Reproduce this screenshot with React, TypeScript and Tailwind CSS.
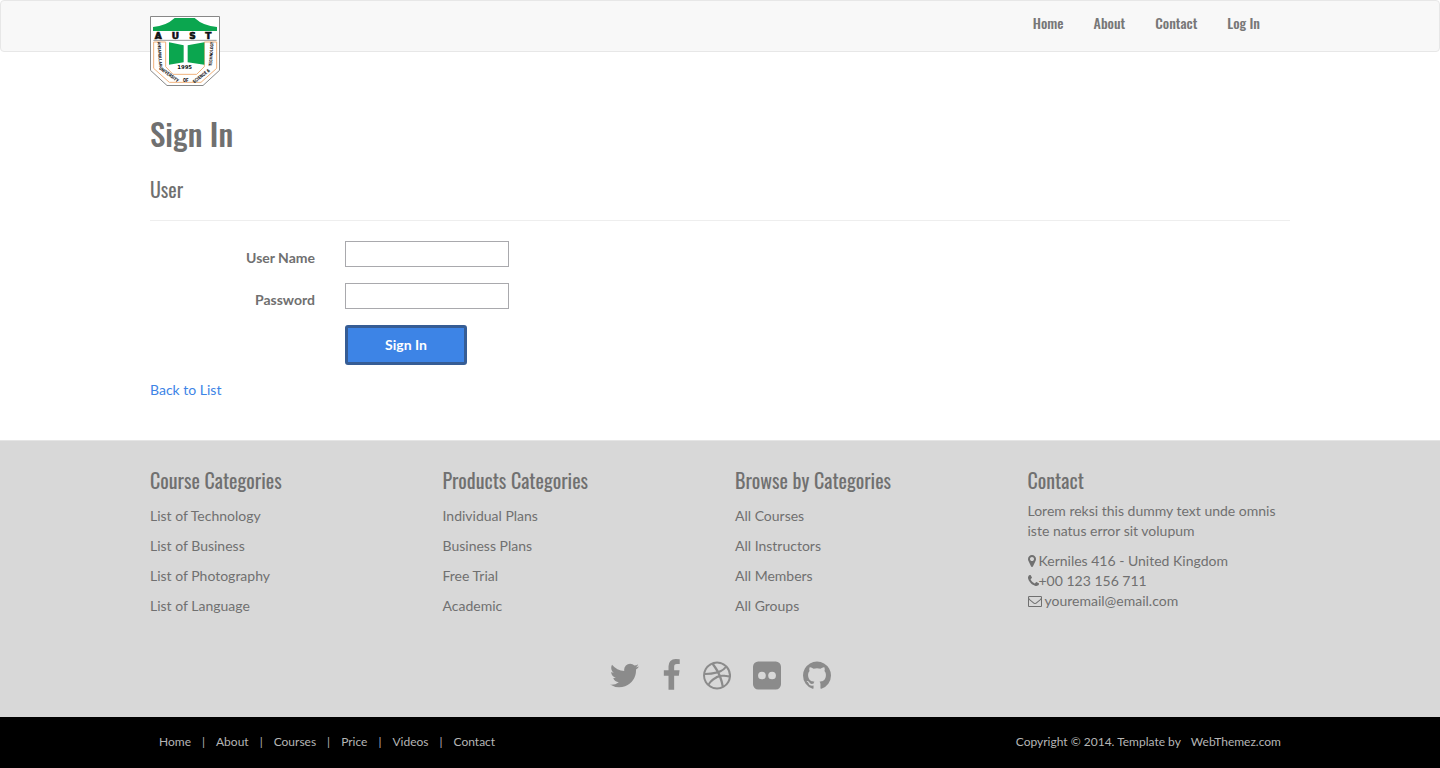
import React from "react";

type Glyph = { label: string; viewBox: string; size: string; path: string };

const social: Glyph[] = [
  {
    label: "Twitter",
    viewBox: "64 0 1664 1792",
    size: "w-[31px] h-[33px]",
    path: "M1684 408q-67 98-162 167 1 14 1 42 0 130-38 259.5t-115.5 248.5-184.5 210.5-258 146-323 54.5q-271 0-496-145 35 4 78 4 225 0 401-138-105-2-188-64.5t-114-159.5q33 5 61 5 43 0 85-11-112-23-185.5-111.5t-73.5-205.5v-4q68 38 146 41-66-44-105-115t-39-154q0-88 44-163 121 149 294.5 238.5t371.5 99.5q-8-38-8-74 0-134 94.5-228.5t228.5-94.5q140 0 236 102 109-21 205-78-37 115-142 178 93-10 186-50z",
  },
  {
    label: "Facebook",
    viewBox: "384 0 1024 1792",
    size: "w-[19px] h-[33px]",
    path: "M1343 12v264h-157q-86 0-116 36t-30 108v189h293l-39 296h-254v759h-306v-759h-255v-296h255v-218q0-186 104-288.5t277-102.5q147 0 228 12z",
  },
  {
    label: "Dribbble",
    viewBox: "128 0 1536 1792",
    size: "w-[28px] h-[33px]",
    path: "M1152 1500q-42-241-140-498h-2l-2 1q-16 6-43 16.5t-101 49-137 82-131 114.5-103 148l-15-11q184 150 418 150 132 0 256-52zm-185-607q-21-49-53-111-311 93-673 93-1 7-1 21 0 124 44 236.5t124 201.5q50-89 123.5-166.5t142.5-124.5 130.5-81 99.5-48l37-13q4-1 13-3.5t13-4.5zm-107-212q-120-213-244-378-138 65-234 186t-128 272q302 0 606-80zm684 319q-210-60-409-29 87 239 128 469 111-75 185-189.5t96-250.5zm-803-741q-1 0-2 1 1-1 2-1zm590 145q-185-164-433-164-76 0-155 19 131 170 246 382 69-26 130-60.5t96.5-61.5 65.5-57 37.5-40.5zm223 485q-3-232-149-410l-1 1q-9 12-19 24.5t-43.5 44.5-71 60.5-100 65-131.5 64.5q25 53 44 95 2 5 6.5 17t7.5 17q36-5 74.5-7t73.5-2 69 1.5 64 4 56.5 5.5 48 6.5 36.5 6 25 4.5zm112 7q0 209-103 385.5t-279.5 279.5-385.5 103-385.5-103-279.5-279.5-103-385.5 103-385.5 279.5-279.5 385.5-103 385.5 103 279.5 279.5 103 385.5z",
  },
  {
    label: "Flickr",
    viewBox: "128 0 1536 1792",
    size: "w-[28px] h-[33px]",
    path: "M1376 128q119 0 203.500 84.500t84.500 203.500v960q0 119-84.500 203.500t-203.500 84.500h-960q-119 0-203.500-84.500t-84.500-203.500v-960q0-119 84.500-203.500t203.500-84.500h960zM830 896a212 212 0 1 0-424 0a212 212 0 1 0 424 0zM1386 896a212 212 0 1 0-424 0a212 212 0 1 0 424 0z",
  },
  {
    label: "GitHub",
    viewBox: "128 0 1536 1792",
    size: "w-[28px] h-[33px]",
    path: "M896 128q209 0 385.5 103t279.500 279.500 103 385.500q0 251-146.500 451.500t-378.500 277.500q-27 5-40-7t-13-30q0-3 .5-76.500t.5-134.500q0-97-52-142 57-6 102.500-18t94-39 81-66.500 53-105 20.500-150.500q0-119-79-206 37-91-8-204-28-9-81 11t-92 44l-38 24q-93-26-192-26t-192 26q-16-11-42.500-27t-83.500-38.500-85-13.500q-45 113-8 204-79 87-79 206 0 85 20.500 150t52.500 105 80.500 67 94 39 102.500 18q-39 36-49 103-21 10-45 15t-57 5-65.500-21.500-55.500-62.500q-19-32-48.500-52t-49.500-24l-20-3q-21 0-29 4.500t-5 11.500 9 14 13 12l7 5q22 10 43.500 38t31.500 51l10 23q13 38 44 61.500t67 30 69.500 7 55.500-3.500l23-4q0 38 .5 88.500t.5 54.500q0 18-13 30t-40 7q-232-77-378.500-277.500t-146.500-451.500q0-209 103-385.500t279.500-279.500 385.500-103z",
  },
];

const pin =
  "M1152 640q0-106-75-181t-181-75-181 75-75 181 75 181 181 75 181-75 75-181zm256 0q0 109-33 179l-364 774q-16 33-47.500 52t-67.500 19-67.500-19-46.500-52l-365-774q-33-70-33-179 0-212 150-362t362-150 362 150 150 362z";
const phone =
  "M1600 1240q0 27-10 70.500t-21 68.500q-21 50-122 106-94 51-186 51-27 0-53-3.500t-57.500-12.500-47-14.500-55.500-20.500-49-18q-98-35-175-83-127-79-264-216t-216-264q-48-77-83-175-3-9-18-49t-20.500-55.500-14.500-47-12.500-57.500-3.500-53q0-92 51-186 56-101 106-122 25-11 68.500-21t70.500-10q14 0 21 3 18 6 53 76 11 19 30 54t35 63.500 31 53.500q3 4 17.500 25t21.500 35.500 7 28.500q0 20-28.500 50t-62 55-62 53-28.500 46q0 9 5 22.500t8.500 20.500 14 24 11.500 19q76 137 174 235t235 174q2 1 19 11.500t24 14 20.500 8.500 22.500 5q18 0 46-28.500t53-62 55-62 50-28.500q14 0 28.500 7t35.500 21.500 25 17.500q25 15 53.500 31t63.500 35 54 30q70 35 76 53 3 7 3 21z";
const envelope =
  "M1664 1504v-768q-32 36-69 66-268 206-426 338-51 43-83 67t-86.500 48.500-102.500 24.500h-2q-48 0-102.500-24.500t-86.500-48.500-83-67q-158-132-426-338-37-30-69-66v768q0 13 9.500 22.500t22.500 9.500h1472q13 0 22.500-9.500t9.500-22.500zm0-1051v-24.500l-.5-13-3-12.500-5.500-9-9-7.500-14-2.500h-1472q-13 0-22.500 9.500t-9.500 22.500q0 168 147 284 193 152 401 317 6 5 35 29.500t46 37.500 44.500 31.500 50.500 27.500 43 9h2q20 0 43-9t50.500-27.500 44.500-31.500 46-37.500 35-29.500q208-165 401-317 54-43 100.500-115.500t46.500-131.500zm128-37v1088q0 66-47 113t-113 47h-1472q-66 0-113-47t-47-113v-1088q0-66 47-113t113-47h1472q66 0 113 47t47 113z";

const heading = "font-['Oswald','Roboto_Condensed','Liberation_Sans_Narrow',sans-serif]";
const container = "mx-auto w-full max-w-[1170px] px-[15px]";

const columns = [
  { title: "Course Categories", items: ["List of Technology", "List of Business", "List of Photography", "List of Language"] },
  { title: "Products Categories", items: ["Individual Plans", "Business Plans", "Free Trial", "Academic"] },
  { title: "Browse by Categories", items: ["All Courses", "All Instructors", "All Members", "All Groups"] },
];

function Logo() {
  return (
    <svg viewBox="0 0 210 210" className="block h-[70px] w-[70px]" role="img" aria-label="AUST">
      <path d="M1.500 1.500H208.500V163L159 208.500H51L1.500 163Z" fill="#fff" stroke="#888" strokeWidth="3" />
      <path d="M9 45V33Q48 30 74 6H134Q160 30 201 33V45Z" fill="#0ba64f" />
      <g fill="#111" fontFamily="DejaVu Sans" fontWeight="bold">
        <text x="14 65 118 166" y="68" fontSize="27" stroke="#111" strokeWidth="2">AUST</text>
        <text x="104" y="158" fontSize="16" textAnchor="middle">1995</text>
      </g>
      <path d="M10 73H200" stroke="#999" strokeWidth="3" />
      <path d="M11 78H47V152L69 175H140L163 152V78H200V157L153 199H58L11 157Z" fill="none" stroke="#f0b27c" strokeWidth="3" />
      <path d="M57 79L101 88V139L57 146ZM163 79L113 88V139L163 146Z" fill="#0ba64f" />
      <g fill="#111" fontFamily="Liberation Sans Narrow, Roboto Condensed, Oswald" fontWeight="bold" textAnchor="middle">
        <text transform="translate(25 115) rotate(86)" fontSize="13">AHSANULLAH</text>
        <text transform="translate(54 179) rotate(36)" fontSize="14">UNIVERSITY</text>
        <text x="107" y="197" fontSize="15">OF</text>
        <text transform="translate(157 184) rotate(-38)" fontSize="14">SCIENCE &amp;</text>
        <text transform="translate(188 114) rotate(-86)" fontSize="13">TECHNOLOGY</text>
      </g>
    </svg>
  );
}

function Field({ id, label, type }: { id: string; label: string; type: string }) {
  return (
    <div className="flex h-[42px] items-start gap-[30px]">
      <label htmlFor={id} className="w-[165px] pt-[7px] text-right font-bold">{label}</label>
      <input id={id} type={type} className="h-[26px] w-[164px] border border-[#a9a9ad] bg-white px-1 text-[#555]" />
    </div>
  );
}

function SmallIcon({ d, viewBox, className }: { d: string; viewBox: string; className: string }) {
  return (
    <svg viewBox={viewBox} className={className} fill="currentColor" aria-hidden="true">
      <path d={d} />
    </svg>
  );
}

export default function App() {
  return (
    <div className="flex min-h-screen flex-col bg-white font-['Lato',sans-serif] text-[14px] leading-[20px] text-[#707070]">
      <header className="h-[52px] rounded-[4px] border border-[#e7e7e7] bg-[#f8f8f8]">
        <div className={`${container} flex items-start justify-between pt-[15px]`}>
          <a href="#"><Logo /></a>
          <nav className={`${heading} flex gap-[30px] pr-[30px] -mt-[3px] text-[14px] font-medium text-[#777]`}>
            {["Home", "About", "Contact", "Log In"].map((t) => (
              <a key={t} href="#">{t}</a>
            ))}
          </nav>
        </div>
      </header>

      <main className={`${container} pt-[61px] pb-[40px]`}>
        <h1 className={`${heading} text-[31px] leading-[40px] font-medium`}>Sign In</h1>
        <h2 className={`${heading} mt-[25px] text-[20px] leading-[22px] font-normal`}>User</h2>
        <hr className="mt-[20px] mb-[20px] border-[#eee]" />
        <form onSubmit={(e: React.FormEvent) => e.preventDefault()}>
          <Field id="username" label="User Name" type="text" />
          <Field id="password" label="Password" type="password" />
          <div className="pl-[195px]">
            <button type="submit" className="block h-[40px] w-[122px] rounded-[3px] border-[3px] border-[#365d95] bg-[#3d84e6] font-bold text-white">
              Sign In
            </button>
          </div>
        </form>
        <a href="#" className="mt-[15px] block w-fit text-[#3d84e6]">Back to List</a>
      </main>

      <footer className="flex grow flex-col">
        <div className="border-t border-[#e5e5e5] bg-[#d8d8d8] pt-[28px] pb-[25px]">
          <div className={`${container} grid grid-cols-4 gap-[30px]`}>
            {columns.map((c) => (
              <section key={c.title}>
                <h3 className={`${heading} text-[20px] leading-[22px] font-normal`}>{c.title}</h3>
                <ul className="mt-[15px] flex flex-col gap-[10px]">
                  {c.items.map((t) => (
                    <li key={t}><a href="#">{t}</a></li>
                  ))}
                </ul>
              </section>
            ))}
            <section>
              <h3 className={`${heading} text-[20px] leading-[22px] font-normal`}>Contact</h3>
              <p className="mt-[10px]">Lorem reksi this dummy text unde omnis iste natus error sit volupum</p>
              <ul className="mt-[10px]">
                <li className="flex items-center gap-[3px]">
                  <SmallIcon d={pin} viewBox="384 0 1024 1792" className="h-[14px] w-[8px]" />
                  Kerniles 416 - United Kingdom
                </li>
                <li className="flex items-center">
                  <SmallIcon d={phone} viewBox="192 0 1408 1792" className="h-[14px] w-[11px]" />
                  +00 123 156 711
                </li>
                <li className="flex items-center gap-[3px]">
                  <SmallIcon d={envelope} viewBox="0 0 1792 1792" className="h-[14px] w-[14px]" />
                  youremail@email.com
                </li>
              </ul>
            </section>
          </div>
          <div className="mt-[43px] flex justify-center gap-[22px] text-[#8b8b8b]">
            {social.map((s) => (
              <a key={s.label} href="#" aria-label={s.label}>
                <svg viewBox={s.viewBox} className={`${s.size} block`} fill="currentColor" fillRule={s.label === "Flickr" ? "evenodd" : "nonzero"}>
                  <path d={s.path} />
                </svg>
              </a>
            ))}
          </div>
        </div>
        <div className="grow bg-black pt-[15px] pb-[14px] text-[12px] text-[#b5b5b5]">
          <div className={`${container} flex justify-between`}>
            <nav className="flex gap-[11px] pl-[9px]">
              {["Home", "About", "Courses", "Price", "Videos", "Contact"].map((t, i) => (
                <React.Fragment key={t}>
                  {i > 0 && <span>|</span>}
                  <a href="#">{t}</a>
                </React.Fragment>
              ))}
            </nav>
            <p className="flex gap-[10px] pr-[9px]">
              <span>Copyright © 2014. Template by</span>
              <a href="#">WebThemez.com</a>
            </p>
          </div>
        </div>
      </footer>
    </div>
  );
}
